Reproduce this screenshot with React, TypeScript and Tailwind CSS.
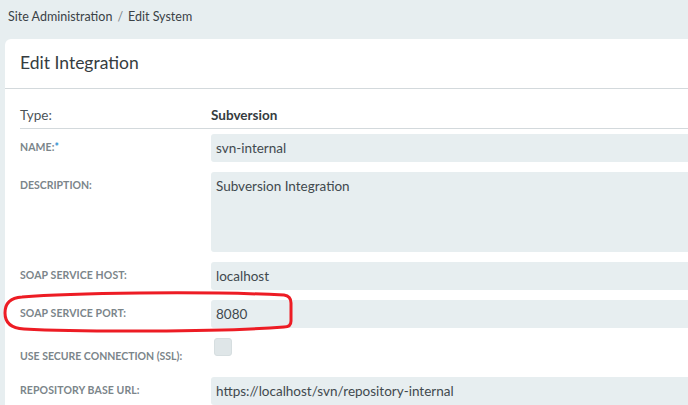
import React from 'react';

const font = { fontFamily: 'Lato, "Noto Sans", sans-serif' };

function Field({ label, children, required }: { label: string; children: React.ReactNode; required?: boolean }) {
  return (
    <div className="grid grid-cols-[191px_1fr] items-start mb-[10px]">
      <div className="h-7 flex items-center text-[10.5px] font-bold text-[#7b858a] tracking-[0.1px]">
        {label}
        {required && <span className="text-[#2a8fd0]">*</span>}
      </div>
      {children}
    </div>
  );
}

function Input({ value }: { value: string }) {
  return (
    <div className="h-7 bg-[#e7eef0] rounded-[3px] px-[5px] flex items-center text-[13.5px] text-[#41494e]">
      {value}
    </div>
  );
}

export default function App() {
  return (
    <div className="w-[688px] h-[405px] overflow-hidden bg-[#e7eef0] relative" style={font}>
      <div className="h-[39px] flex items-center pl-[8px] pb-[4px] text-[12.5px] text-[#3a4246]">
        <span>Site Administration</span>
        <span className="mx-[5px] text-[#7b858a]">/</span>
        <span>Edit System</span>
      </div>

      <div className="ml-[5px] w-[710px] bg-white rounded-tl-[6px] h-[400px]">
        <div className="h-[50px] flex items-center px-[15px] border-b border-[#d3d9dc] text-[17.5px] text-[#353c40]">
          Edit Integration
        </div>

        <div className="pl-[15px] pt-[16px]">
          <div className="grid grid-cols-[191px_1fr] items-center h-[20px] text-[13.5px] mb-[3px]">
            <div className="text-[#4b5358]">Type:</div>
            <div className="font-bold text-[#353c40]">Subversion</div>
          </div>
          <div className="border-b border-[#d3d9dc] mb-[5px]" />

          <Field label="NAME:" required>
            <Input value="svn-internal" />
          </Field>

          <div className="grid grid-cols-[191px_1fr] items-start mb-[10px]">
            <div className="h-7 flex items-center text-[10.5px] font-bold text-[#7b858a]">DESCRIPTION:</div>
            <div className="h-20 bg-[#e7eef0] rounded-[3px] px-[5px] pt-[4px] text-[13.5px] text-[#41494e]">
              Subversion Integration
            </div>
          </div>

          <Field label="SOAP SERVICE HOST:">
            <Input value="localhost" />
          </Field>

          <Field label="SOAP SERVICE PORT:">
            <Input value="8080" />
          </Field>

          <div className="grid grid-cols-[191px_1fr] items-start mb-[11px]">
            <div className="h-7 flex items-end text-[10.5px] font-bold text-[#7b858a]">
              <span className="pb-[1px]">USE SECURE CONNECTION (SSL):</span>
            </div>
            <div className="h-7 pl-[3px]">
              <div className="w-[18px] h-[18px] rounded-[3px] bg-[#dfe6e8] border border-[#d6dee0]" />
            </div>
          </div>

          <Field label="REPOSITORY BASE URL:">
            <Input value="https://localhost/svn/repository-internal" />
          </Field>
        </div>
      </div>

      <svg className="absolute left-0 top-0 pointer-events-none" width="688" height="405" viewBox="0 0 688 405">
        <path
          d="M 22 297 C 70 293, 200 291, 284 295 Q 291 296 291 303 L 291 321 Q 291 327 284 327 C 220 332, 80 332, 24 329 Q 5 328 5 313 Q 5 298 22 297 Z"
          fill="none"
          stroke="#ed1c24"
          strokeWidth="3"
        />
      </svg>
    </div>
  );
}
